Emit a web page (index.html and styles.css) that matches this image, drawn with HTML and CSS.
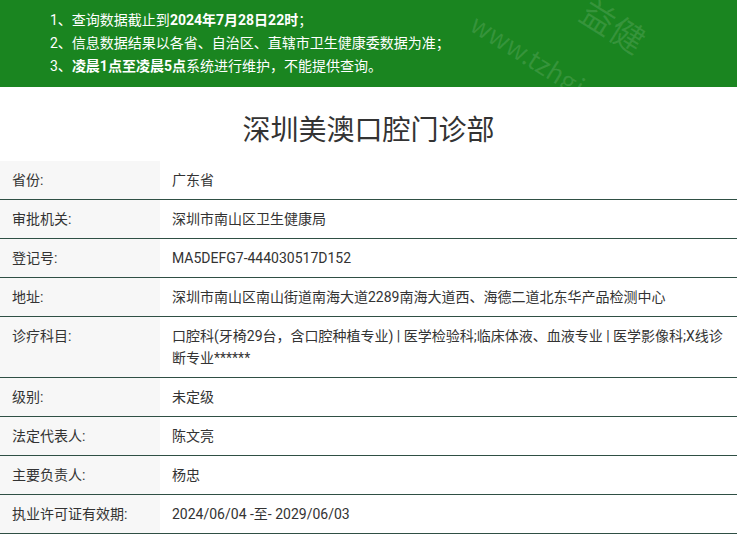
FILE: index.html
```html
<!DOCTYPE html>
<html lang="zh-CN">
<head>
<meta charset="utf-8">
<title>深圳美澳口腔门诊部</title>
<link rel="stylesheet" href="styles.css">
</head>
<body>
<div class="notice">
  <p>1、查询数据截止到<b>2024年7月28日22时</b>；</p>
  <p>2、信息数据结果以各省、自治区、直辖市卫生健康委数据为准；</p>
  <p>3、<b>凌晨1点至凌晨5点</b>系统进行维护，不能提供查询。</p>
  <span class="wm wm-name">益健</span>
  <span class="wm wm-url">www.tzhgj.com</span>
</div>
<h1 class="title">深圳美澳口腔门诊部</h1>
<table class="info">
  <tr><th>省份:</th><td>广东省</td></tr>
  <tr><th>审批机关:</th><td>深圳市南山区卫生健康局</td></tr>
  <tr><th>登记号:</th><td>MA5DEFG7-444030517D152</td></tr>
  <tr><th>地址:</th><td>深圳市南山区南山街道南海大道2289南海大道西、海德二道北东华产品检测中心</td></tr>
  <tr><th>诊疗科目:</th><td>口腔科(牙椅29台，含口腔种植专业) | 医学检验科;临床体液、血液专业 | 医学影像科;X线诊断专业******</td></tr>
  <tr><th>级别:</th><td>未定级</td></tr>
  <tr><th>法定代表人:</th><td>陈文亮</td></tr>
  <tr><th>主要负责人:</th><td>杨忠</td></tr>
  <tr><th>执业许可证有效期:</th><td>2024/06/04 -至- 2029/06/03</td></tr>
</table>
</body>
</html>
```

FILE: styles.css
```css
html, body {
  margin: 0;
  padding: 0;
  background: #fff;
}
body {
  font-family: Roboto, "Noto Sans CJK SC", sans-serif;
  color: #333;
  font-size: 14px;
  overflow: hidden;
}
.notice {
  position: relative;
  overflow: hidden;
  background: #1a8520;
  color: #fff;
  padding: 9px 0 9px 50px;
  height: 69px;
}
.notice p {
  margin: 0;
  line-height: 23px;
  font-size: 14px;
}
.notice b {
  font-weight: 700;
}
.wm {
  position: absolute;
  color: rgba(255, 255, 255, 0.12);
  white-space: nowrap;
  transform-origin: left top;
  font-family: "Noto Sans CJK SC", sans-serif;
}
.wm-name {
  left: 598px;
  top: -14px;
  font-size: 34px;
  transform: rotate(32deg);
}
.wm-url {
  left: 484px;
  top: 4px;
  font-size: 26px;
  transform: rotate(32deg);
}
.title {
  margin: 0;
  padding: 24px 0 10px;
  text-align: center;
  font-size: 28px;
  line-height: 40px;
  font-weight: 400;
  color: #333;
}
.info {
  width: 100%;
  border-collapse: collapse;
  table-layout: fixed;
}
.info tr {
  border-bottom: 1px solid #2f4f44;
}
.info th, .info td {
  padding: 8px 12px;
  line-height: 22px;
  font-size: 14px;
  font-weight: 400;
  text-align: left;
  vertical-align: top;
  color: #333;
}
.info th {
  width: 136px;
  background: #f7f7f7;
}
.info td {
  background: #fff;
}
```
